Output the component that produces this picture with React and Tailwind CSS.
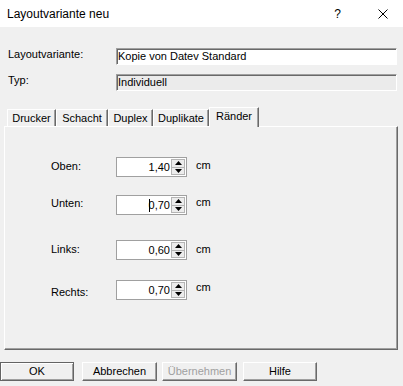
const font = "font-['Liberation_Sans',Arial,sans-serif]"

const margins = [
  { label: 'Oben:', value: '1,40', mt: 'mt-[30px]', ly: '-translate-y-[1px]', cy: '-translate-y-[2px]' },
  { label: 'Unten:', value: '0,70', mt: 'mt-[18px]', ly: '-translate-y-[2px]', cy: '-translate-y-[3px]', caret: true },
  { label: 'Links:', value: '0,60', mt: 'mt-[25px]', ly: '-translate-y-[1px]', cy: '-translate-y-[1px]' },
  { label: 'Rechts:', value: '0,70', mt: 'mt-[20px]', ly: 'translate-y-[2px]', cy: '-translate-y-[3px]' },
]

const tabs = [
  { name: 'Drucker', w: 'w-[49px]' },
  { name: 'Schacht', w: 'w-[52px]' },
  { name: 'Duplex', w: 'w-[45px]' },
  { name: 'Duplikate', w: 'w-[56px]' },
]

function Arrow({ down }) {
  return (
    <svg width="7" height="4" viewBox="0 0 7 4" className="block">
      {down ? <polygon points="0,0 7,0 3.5,4" fill="#000" /> : <polygon points="0,4 7,4 3.5,0" fill="#000" />}
    </svg>
  )
}

function SpinField({ value, caret }) {
  return (
    <div className="flex h-[20px] w-[71px] border border-[#a0a0a0] bg-white">
      <div className="flex flex-1 items-center justify-end pr-[1px] leading-[14px]">
        {caret && <span className="mr-[-1px] inline-block h-[13px] w-[1px] bg-black" />}
        {value}
      </div>
      <div className="my-[1px] mr-[1px] flex w-[14px] flex-col border border-[#b4b4b4] bg-[#ececec]">
        <div className="flex flex-1 items-center justify-center border-b border-[#b4b4b4]">
          <Arrow />
        </div>
        <div className="flex flex-1 items-center justify-center">
          <Arrow down />
        </div>
      </div>
    </div>
  )
}

function Button({ children, def, disabled, w = 'w-[75px]' }) {
  return (
    <div
      className={`flex h-[19px] ${w} items-center justify-center ${
        def
          ? 'border border-[#646464] shadow-[inset_1px_1px_0_#fff,inset_-1px_-1px_0_#a0a0a0]'
          : 'border border-t-white border-l-white border-r-[#696969] border-b-[#696969] shadow-[inset_-1px_-1px_0_#a0a0a0]'
      } ${disabled ? 'text-[#a0a0a0]' : 'text-black'}`}
    >
      {children}
    </div>
  )
}

export default function App() {
  return (
    <div className={`flex h-[386px] w-[403px] flex-col overflow-hidden bg-[#f0f0f0] text-[11px] text-black ${font}`}>
      <div className="flex h-[27px] shrink-0 items-center bg-white text-[12px]">
        <span className="pl-[7px]">Layoutvariante neu</span>
        <span className="ml-auto w-[7px] text-center">?</span>
        <svg width="10" height="10" viewBox="0 0 10 10" className="ml-[37px] mr-[15px]">
          <path d="M0.5 0.5 L9.5 9.5 M9.5 0.5 L0.5 9.5" stroke="#000" strokeWidth="1" />
        </svg>
      </div>

      <div className="mt-[21px] flex items-start">
        <span className="w-[116px] pl-[8px] leading-[13px]">Layoutvariante:</span>
        <div className="h-[17px] w-[281px] border border-t-[#a0a0a0] border-l-[#a0a0a0] border-r-white border-b-white bg-white pl-[1px] leading-[14px] shadow-[inset_1px_1px_0_#696969]">
          Kopie von Datev Standard
        </div>
      </div>
      <div className="mt-[9px] flex items-start">
        <span className="w-[116px] pl-[8px] leading-[13px]">Typ:</span>
        <div className="h-[17px] w-[281px] border border-t-[#a0a0a0] border-l-[#a0a0a0] border-r-white border-b-white bg-[#ebebeb] pl-[1px] leading-[14px] shadow-[inset_1px_1px_0_#696969]">
          Individuell
        </div>
      </div>

      <div className="ml-[4px] mt-[16px] w-[394px]">
        <div className="flex h-[19px] items-end pl-[3px]">
          {tabs.map((t) => (
            <div
              key={t.name}
              className={`flex h-[17px] ${t.w} items-center justify-center border-l border-t border-r border-l-white border-t-white border-r-[#696969] shadow-[inset_-1px_0_0_#a0a0a0]`}
            >
              {t.name}
            </div>
          ))}
          <div className="relative z-10 -mb-[1px] flex h-[20px] w-[50px] items-center justify-center border-l border-t border-r border-l-white border-t-white border-r-[#696969] bg-[#f0f0f0] pb-[2px] shadow-[inset_-1px_0_0_#a0a0a0]">
            Ränder
          </div>
        </div>
        <div className="h-[224px] border border-t-white border-l-white border-r-[#696969] border-b-[#696969] pl-[46px] shadow-[inset_-1px_-1px_0_#a0a0a0]">
          {margins.map((m) => (
            <div key={m.label} className={`${m.mt} flex items-center`}>
              <span className={`w-[65px] ${m.ly}`}>{m.label}</span>
              <SpinField value={m.value} caret={m.caret} />
              <span className={`ml-[9px] ${m.cy}`}>cm</span>
            </div>
          ))}
        </div>
      </div>

      <div className="mt-[12px] flex">
        <Button def w="w-[74px]">OK</Button>
        <div className="ml-[8px]">
          <Button>Abbrechen</Button>
        </div>
        <div className="ml-[5px]">
          <Button disabled>Übernehmen</Button>
        </div>
        <div className="ml-[6px]">
          <Button w="w-[74px]">Hilfe</Button>
        </div>
      </div>
    </div>
  )
}
